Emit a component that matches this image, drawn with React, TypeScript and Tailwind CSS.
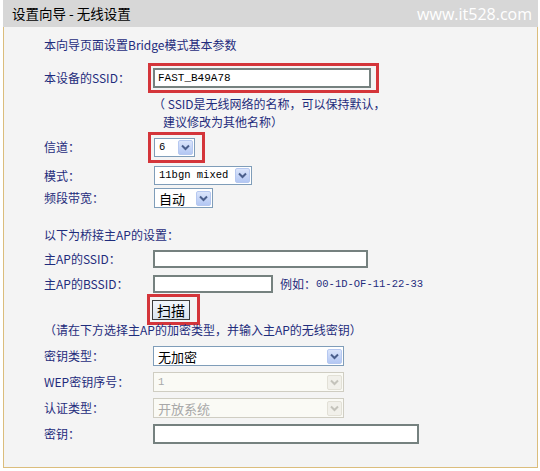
import React from "react";

const labelFont = { fontFamily: '"Noto Sans CJK SC", "Liberation Sans", sans-serif' };
const monoFont = { fontFamily: '"Liberation Mono", monospace' };

function Arrow({ disabled }: { disabled?: boolean }) {
  return (
    <span
      className={
        "flex h-[15px] w-[15px] shrink-0 items-center justify-center rounded-[2px] border " +
        (disabled
          ? "border-[#e2e0d6] bg-[#f1f0ea]"
          : "border-[#b6c8f0] bg-gradient-to-b from-[#dbe5fb] to-[#b3c7f3]")
      }
    >
      <svg width="9" height="7" viewBox="0 0 9 7">
        <path
          d="M1 1.5 L4.5 5 L8 1.5"
          fill="none"
          stroke={disabled ? "#c4c3bb" : "#4b5f8c"}
          strokeWidth="2"
        />
      </svg>
    </span>
  );
}

function Select({
  value,
  width,
  height = "h-[19px]",
  disabled,
  mono,
}: {
  value: string;
  width: string;
  height?: string;
  disabled?: boolean;
  mono?: boolean;
}) {
  return (
    <div
      className={
        "flex items-center justify-between border pl-[4px] pr-[1px] " +
        width +
        " " +
        height +
        (disabled ? " border-[#cfcdc2] bg-[#fafaf5] text-[#a8a8a8]" : " border-[#7f9db9] bg-white text-black")
      }
    >
      <span
        className={mono ? "text-[10.5px] leading-none" : "text-[13px] leading-none"}
        style={mono ? monoFont : labelFont}
      >
        {value}
      </span>
      <Arrow disabled={disabled} />
    </div>
  );
}

function TextBox({ width, height, value }: { width: string; height: string; value?: string }) {
  return (
    <div className={"flex items-center border-2 border-[#75817f] bg-white pl-[3px] " + width + " " + height}>
      {value && (
        <span className="text-[11px] leading-none text-black" style={monoFont}>
          {value}
        </span>
      )}
    </div>
  );
}

function Row({ label, children, h, mt }: { label: string; children: React.ReactNode; h: string; mt: string }) {
  return (
    <div className={"flex items-center " + h + " " + mt}>
      <div className="w-[109px] shrink-0 text-[12px] leading-none text-[#1f2c7c]" style={labelFont}>
        {label}
      </div>
      {children}
    </div>
  );
}

export default function App() {
  return (
    <div className="h-[471px] w-[540px] overflow-hidden bg-white" style={labelFont}>
      {/* title bar */}
      <div className="ml-[3px] flex h-[27px] w-[535px] items-center justify-between bg-[#d7d7d7] pl-[9px] pr-[6px]">
        <span className="text-[13.5px] leading-none text-black">设置向导 - 无线设置</span>
        <span
          className="text-[16px] leading-none text-white"
          style={{ fontFamily: '"Open Sans", "Liberation Sans", sans-serif' }}
        >
          www.it528.com
        </span>
      </div>

      {/* form body */}
      <div className="ml-[3px] flex h-[441px] w-[535px] flex-col border-x border-b border-[#dbbd7c] bg-[#f4f4f4] pl-[40px]">
        <div className="mt-[10px] h-[16px] text-[12px] leading-[16px] text-[#1f2c7c]">
          本向导页面设置Bridge模式基本参数
        </div>

        <Row label="本设备的SSID：" h="h-[30px]" mt="mt-[10px]">
          <div className="-ml-[5px] flex h-[30px] w-[231px] items-center border-[3px] border-[#d4353a] pl-[2px]">
            <TextBox width="w-[218px]" height="h-[20px]" value="FAST_B49A78" />
          </div>
        </Row>

        <div className="mt-[3px] flex h-[16px] items-center pl-[109px] text-[12px] leading-none text-[#1f2c7c]">
          （ SSID是无线网络的名称，可以保持默认，
        </div>
        <div className="mt-[2px] flex h-[16px] items-center pl-[119px] text-[12px] leading-none text-[#1f2c7c]">
          建议修改为其他名称）
        </div>

        <Row label="信道：" h="h-[30px]" mt="mt-[2px]">
          <div className="-ml-[5px] flex h-[31px] w-[57px] items-center border-[3px] border-[#d4353a] pl-[3px]">
            <Select value="6" width="w-[41px]" height="h-[19px]" mono />
          </div>
        </Row>

        <Row label="模式：" h="h-[19px]" mt="mt-[4px]">
          <div className="ml-[1px]">
            <Select value="11bgn mixed" width="w-[98px]" mono />
          </div>
        </Row>

        <Row label="频段带宽：" h="h-[20px]" mt="mt-[3px]">
          <div className="ml-[1px]">
            <Select value="自动" width="w-[59px]" height="h-[20px]" />
          </div>
        </Row>

        <div className="mt-[19px] flex h-[16px] items-center text-[12px] leading-none text-[#1f2c7c]">
          以下为桥接主AP的设置：
        </div>

        <Row label="主AP的SSID：" h="h-[18px]" mt="mt-[7px]">
          <TextBox width="w-[215px]" height="h-[18px]" />
        </Row>

        <Row label="主AP的BSSID：" h="h-[18px]" mt="mt-[7px]">
          <TextBox width="w-[120px]" height="h-[18px]" />
          <span className="ml-[7px] text-[12px] leading-none text-[#1f2c7c]">例如：</span>
          <span className="text-[10.5px] leading-none text-[#1f2c7c]" style={monoFont}>
            00-1D-OF-11-22-33
          </span>
        </Row>

        <div className="mt-[1px] flex h-[28px] items-start pl-[103px]">
          <div className="flex h-[31px] w-[53px] items-center border-[3px] border-[#d4353a] pl-[2px]">
            <div className="flex h-[20px] w-[38px] items-center justify-center border border-[#3c3c3c] bg-gradient-to-b from-[#f2f6fb] to-[#d9e4ef] text-[14px] leading-none text-black">
              扫描
            </div>
          </div>
        </div>

        <div className="flex h-[16px] items-center text-[12px] leading-none text-[#1f2c7c]">
          （请在下方选择主AP的加密类型，并输入主AP的无线密钥）
        </div>

        <Row label="密钥类型：" h="h-[20px]" mt="mt-[8px]">
          <Select value="无加密" width="w-[191px]" height="h-[20px]" />
        </Row>
        <Row label="WEP密钥序号：" h="h-[20px]" mt="mt-[6px]">
          <Select value="1" width="w-[191px]" height="h-[20px]" disabled mono />
        </Row>
        <Row label="认证类型：" h="h-[20px]" mt="mt-[6px]">
          <Select value="开放系统" width="w-[191px]" height="h-[20px]" disabled />
        </Row>
        <Row label="密钥：" h="h-[20px]" mt="mt-[6px]">
          <TextBox width="w-[266px]" height="h-[20px]" />
        </Row>
      </div>
    </div>
  );
}
